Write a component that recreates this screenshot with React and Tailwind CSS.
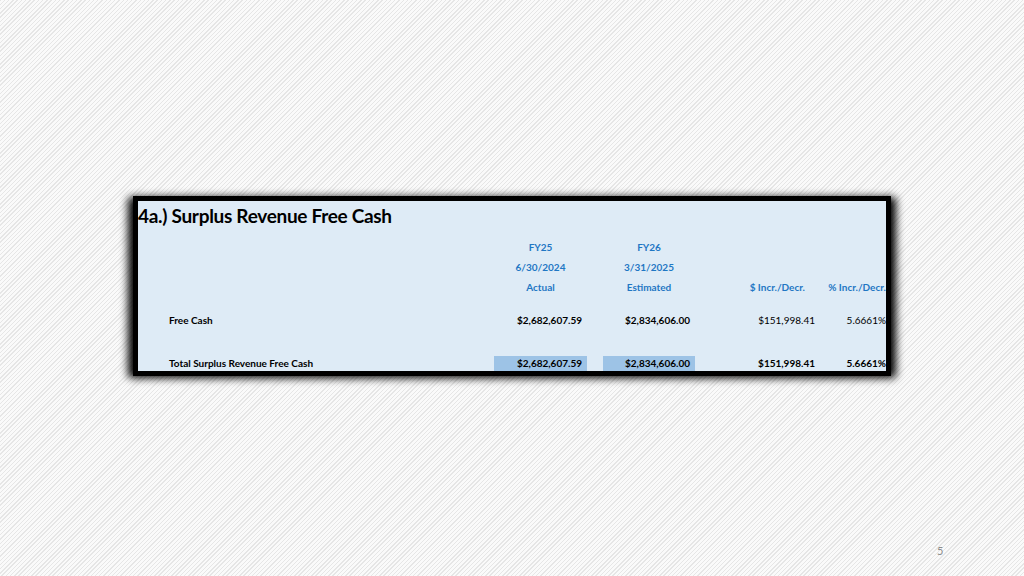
export default function App() {
  const f = { fontFamily: "Lato, 'Open Sans', sans-serif" };
  const row = "grid grid-cols-[356px_93px_16px_92px_120px_73px] items-center text-[10px] h-[20px]";
  return (
    <div style={f} className="w-[1024px] h-[576px] relative overflow-hidden bg-[repeating-linear-gradient(135deg,#e6e6e6_0px,#e6e6e6_1px,#fafafa_1px,#fafafa_3px)]">
      <div className="absolute left-[128px] top-[197px] w-[768px] h-[181px] bg-black blur-[4px] rounded"></div>
      <div className="absolute left-[133px] top-[196px] w-[758px] h-[180px] border-[5px] border-black bg-[#deebf6] overflow-hidden flex flex-col">
        <div className="h-[20px] pl-[0px] mt-[5px] text-[19px] font-bold text-black leading-[20px] tracking-[-0.3px]">4a.) Surplus Revenue Free Cash</div>
        <div className="mt-[11px] text-[#1f77c4] font-bold">
          <div className={row}><span/><span className="text-center">FY25</span><span/><span className="text-center">FY26</span><span/><span/></div>
          <div className={row}><span/><span className="text-center">6/30/2024</span><span/><span className="text-center">3/31/2025</span><span/><span/></div>
          <div className={row}><span/><span className="text-center">Actual</span><span/><span className="text-center">Estimated</span><span className="text-right pr-[10px]">$ Incr./Decr.</span><span className="text-right pr-[2px]">% Incr./Decr.</span></div>
        </div>
        <div className={row + " mt-[16px] text-black"}>
          <span className="pl-[31px] font-bold">Free Cash</span>
          <span className="text-right pr-[5px] font-bold">$2,682,607.59</span><span/>
          <span className="text-right pr-[5px] font-bold">$2,834,606.00</span>
          <span className="text-right">$151,998.41</span>
          <span className="text-right pr-[2px]">5.6661%</span>
        </div>
        <div className={row + " mt-[27px] text-black font-bold"}>
          <span className="pl-[31px]">Total Surplus Revenue Free Cash</span>
          <span className="text-right pr-[5px] bg-[#9dc3e6] h-full flex items-center justify-end">$2,682,607.59</span><span/>
          <span className="text-right pr-[5px] bg-[#9dc3e6] h-full flex items-center justify-end">$2,834,606.00</span>
          <span className="text-right">$151,998.41</span>
          <span className="text-right pr-[2px]">5.6661%</span>
        </div>
      </div>
      <div className="absolute left-[937px] top-[543px] text-[11px] text-[#8c8c8c]">5</div>
    </div>
  );
}
